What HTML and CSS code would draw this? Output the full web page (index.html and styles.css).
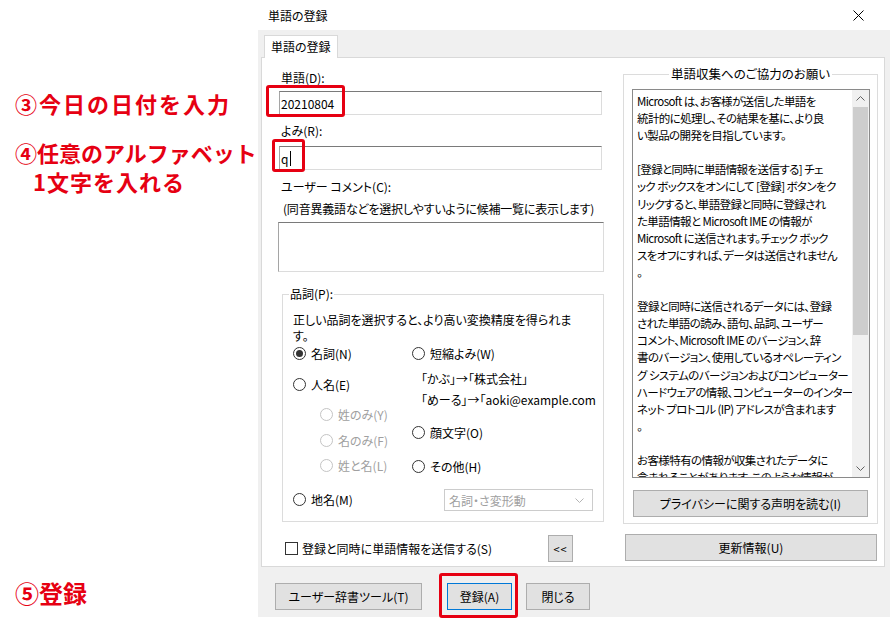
FILE: index.html
```html
<!DOCTYPE html>
<html lang="ja">
  <head>
    <meta charset="UTF-8" />
    <meta name="viewport" content="width=device-width, initial-scale=1.0" />
    <title>単語の登録</title>
    <link rel="stylesheet" href="styles.css">
  </head>
  <body>
    <div class="notes">
      <p class="note note-date">③今日の日付を入力</p>
      <p class="note note-yomi">④任意のアルファベット</p>
      <p class="note note-yomi-2">1文字を入れる</p>
      <p class="note note-submit">⑤登録</p>
    </div>

    <div class="dialog">
      <div class="titlebar">
        <span class="title">単語の登録</span>
        <svg class="close" width="11" height="11" viewBox="0 0 11 11">
          <path d="M0.5 0.5L10.5 10.5M10.5 0.5L0.5 10.5" stroke="#000" stroke-width="1" fill="none" />
        </svg>
      </div>

      <div class="dialog-body">
        <div class="tabs">
          <div class="tab">単語の登録</div>
        </div>

        <div class="panel">
          <!-- left: word entry -->
          <div class="col-left">
            <div class="label">単語(D):</div>
            <div class="field field-word">
              <div class="input">20210804</div>
              <div class="mark mark-word"></div>
            </div>

            <div class="label label-yomi">よみ(R):</div>
            <div class="field field-yomi">
              <div class="input">q<span class="caret"></span></div>
              <div class="mark mark-yomi"></div>
            </div>

            <div class="label label-comment">ユーザー コメント(C):</div>
            <div class="hint">(同音異義語などを選択しやすいように候補一覧に表示します)</div>
            <div class="textarea"></div>

            <div class="group pos-group">
              <span class="group-title">品詞(P):</span>
              <p class="pos-desc">正しい品詞を選択すると、より高い変換精度を得られま<br>す。</p>
              <div class="pos-cols">
                <div class="pos-col pos-col-left">
                  <div class="radio checked"><span class="radio-dot"></span>名詞(N)</div>
                  <div class="radio r-person"><span class="radio-dot"></span>人名(E)</div>
                  <div class="radio disabled sub r-sei"><span class="radio-dot"></span>姓のみ(Y)</div>
                  <div class="radio disabled sub r-mei"><span class="radio-dot"></span>名のみ(F)</div>
                  <div class="radio disabled sub r-seimei"><span class="radio-dot"></span>姓と名(L)</div>
                  <div class="radio r-place"><span class="radio-dot"></span>地名(M)</div>
                </div>
                <div class="pos-col pos-col-right">
                  <div class="radio"><span class="radio-dot"></span>短縮よみ(W)</div>
                  <div class="example ex-first">「かぶ」→「株式会社」</div>
                  <div class="example ex-second">「めーる」→「aoki@example.com</div>
                  <div class="radio r-face"><span class="radio-dot"></span>顔文字(O)</div>
                  <div class="radio r-other"><span class="radio-dot"></span>その他(H)</div>
                  <div class="combo">
                    <span>名詞・さ変形動</span>
                    <svg width="9" height="5" viewBox="0 0 9 5">
                      <path d="M0.5 0.5L4.5 4.5L8.5 0.5" fill="none" stroke="#b4b4b4" />
                    </svg>
                  </div>
                </div>
              </div>
            </div>

            <div class="send-row">
              <span class="checkbox"></span>
              <span class="send-label">登録と同時に単語情報を送信する(S)</span>
              <div class="btn btn-collapse">&lt;&lt;</div>
            </div>
          </div>

          <!-- right: info -->
          <div class="col-right">
            <div class="group info-group">
              <div class="info-title"><span>単語収集へのご協力のお願い</span></div>
              <div class="info-box">
                <div class="info-text">Microsoft は、お客様が送信した単語を
統計的に処理し、その結果を基に、より良
い製品の開発を目指しています。

[登録と同時に単語情報を送信する] チェ
ック ボックスをオンにして [登録] ボタンをク
リックすると、単語登録と同時に登録され
た単語情報と Microsoft IME の情報が
Microsoft に送信されます。チェック ボック
スをオフにすれば、データは送信されません
。

登録と同時に送信されるデータには、登録
された単語の読み、語句、品詞、ユーザー
コメント、Microsoft IME のバージョン、辞
書のバージョン、使用しているオペレーティン
グ システムのバージョンおよびコンピューター
ハードウェアの情報、コンピューターのインター
ネット プロトコル (IP) アドレスが含まれます
。

お客様特有の情報が収集されたデータに
含まれることがあります。このような情報が</div>
                <div class="scrollbar">
                  <div class="sb-arrow">
                    <svg width="9" height="5" viewBox="0 0 9 5">
                      <path d="M0.5 4.5L4.5 0.5L8.5 4.5" fill="none" stroke="#606060" />
                    </svg>
                  </div>
                  <div class="sb-thumb"></div>
                  <div class="sb-track"></div>
                  <div class="sb-arrow">
                    <svg width="9" height="5" viewBox="0 0 9 5">
                      <path d="M0.5 0.5L4.5 4.5L8.5 0.5" fill="none" stroke="#606060" />
                    </svg>
                  </div>
                </div>
              </div>
              <div class="btn btn-privacy">プライバシーに関する声明を読む(I)</div>
            </div>
            <div class="btn btn-update">更新情報(U)</div>
          </div>
        </div>

        <div class="actions">
          <div class="btn btn-tool">ユーザー辞書ツール(T)</div>
          <div class="btn-wrap">
            <div class="btn btn-default">登録(A)</div>
            <div class="mark mark-submit"></div>
          </div>
          <div class="btn btn-close">閉じる</div>
        </div>
      </div>
    </div>
  </body>
</html>
```

FILE: styles.css
```css
* {
  box-sizing: border-box;
}

body {
  margin: 0;
  width: 890px;
  height: 620px;
  display: flex;
  background: #fff;
  font-family: "Noto Sans CJK JP", sans-serif;
  font-size: 12px;
  color: #000;
  font-feature-settings: "palt";
  overflow: hidden;
}

/* annotations */
.notes {
  width: 258px;
  display: flex;
  flex-direction: column;
  padding: 0 0 13px 15px;
  color: #e60012;
  font-weight: bold;
  font-feature-settings: normal;
}

.note {
  margin: 0;
  font-size: 22px;
  line-height: 28px;
  letter-spacing: 2px;
  white-space: nowrap;
}

.note-date {
  margin-top: 89px;
}

.note-yomi {
  margin-top: 21px;
  letter-spacing: 0;
}

.note-yomi-2 {
  margin-top: 1px;
  padding-left: 18px;
  letter-spacing: 1px;
}

.note-submit {
  margin-top: auto;
  font-size: 24px;
  letter-spacing: 0;
}

.mark {
  position: absolute;
  border: 3px solid #e60012;
  border-radius: 3px;
  pointer-events: none;
}

/* dialog */
.dialog {
  width: 632px;
  height: 617px;
  display: flex;
  flex-direction: column;
}

.titlebar {
  height: 30px;
  display: flex;
  align-items: center;
  justify-content: space-between;
  padding: 0 26px 0 10px;
  background: #fff;
}

.dialog-body {
  flex: 1;
  display: flex;
  flex-direction: column;
  background: #f0f0f0;
  padding: 0 5px 0 3px;
}

.tabs {
  display: flex;
  padding: 5px 0 0 3px;
}

.tab {
  height: 23px;
  padding: 0 6px;
  line-height: 21px;
  background: #fff;
  border: 1px solid #d9d9d9;
  border-bottom: none;
  margin-bottom: -1px;
  position: relative;
  z-index: 1;
}

.panel {
  height: 510px;
  display: flex;
  padding: 12px 6px 0 16px;
  background: #fff;
  border: 1px solid #d9d9d9;
}

.col-left {
  width: 326px;
  display: flex;
  flex-direction: column;
}

.label {
  line-height: 16px;
  padding-left: 3px;
}

.label-yomi {
  margin-top: 8px;
}

.label-comment {
  margin-top: 9px;
}

.field {
  position: relative;
  width: 323px;
  margin-left: 1px;
}

.field-word {
  margin-top: 5px;
}

.field-yomi {
  margin-top: 7px;
}

.input {
  height: 24px;
  display: flex;
  align-items: center;
  padding-left: 1px;
  background: #fff;
  border: 1px solid;
  border-color: #7a7a7a #dcdcdc #dcdcdc #a5a5a5;
}

.caret {
  width: 1px;
  height: 15px;
  margin-left: 2px;
  background: #000;
}

.mark-word {
  left: -13px;
  top: -6px;
  width: 79px;
  height: 32px;
}

.mark-yomi {
  left: -7px;
  top: -7px;
  width: 33px;
  height: 33px;
}

.hint {
  margin-top: 6px;
  padding-left: 5px;
  line-height: 16px;
  letter-spacing: -0.2px;
  white-space: nowrap;
}

.textarea {
  height: 50px;
  margin-top: 5px;
  background: #fff;
  border: 1px solid;
  border-color: #7a7a7a #dcdcdc #dcdcdc #a5a5a5;
}

.group {
  position: relative;
  border: 1px solid #dcdcdc;
}

.group-title {
  position: absolute;
  top: -9px;
  left: 6px;
  padding: 0 1px;
  line-height: 16px;
  background: #fff;
}

.pos-group {
  width: 322px;
  height: 228px;
  margin: 22px 0 0 4px;
  padding: 17px 0 0 10px;
}

.pos-desc {
  margin: 0;
  line-height: 16px;
}

.pos-cols {
  display: flex;
}

.pos-col-left {
  width: 119px;
}

.radio {
  height: 18px;
  display: flex;
  align-items: center;
  white-space: nowrap;
}

.radio-dot {
  width: 13px;
  height: 13px;
  flex: none;
  margin-right: 5px;
  display: flex;
  align-items: center;
  justify-content: center;
  background: #fff;
  border: 1px solid #333;
  border-radius: 50%;
}

.radio.checked .radio-dot::after {
  content: "";
  width: 7px;
  height: 7px;
  border-radius: 50%;
  background: #333;
}

.radio.disabled {
  color: #a0a0a0;
}

.radio.disabled .radio-dot {
  border-color: #c4c4c4;
}

.radio.sub {
  margin-left: 27px;
}

.r-person {
  margin-top: 13px;
}

.r-sei {
  margin-top: 12px;
}

.r-mei {
  margin-top: 8px;
}

.r-seimei {
  margin-top: 7px;
}

.r-place {
  margin-top: 16px;
}

.example {
  height: 18px;
  line-height: 18px;
  margin-left: 9px;
  white-space: nowrap;
}

.ex-first {
  margin-top: 8px;
}

.ex-second {
  margin-top: 3px;
}

.r-face {
  margin-top: 14px;
}

.r-other {
  margin-top: 16px;
}

.combo {
  width: 149px;
  height: 22px;
  margin: 14px 0 0 32px;
  padding: 0 8px 0 4px;
  display: flex;
  align-items: center;
  justify-content: space-between;
  color: #a0a0a0;
  background: #fff;
  border: 1px solid #cccccc;
}

.send-row {
  height: 27px;
  margin-top: 13px;
  padding: 0 31px 0 7px;
  display: flex;
  align-items: center;
}

.checkbox {
  width: 13px;
  height: 13px;
  background: #fff;
  border: 1px solid #333;
}

.send-label {
  margin-left: 4px;
}

/* buttons */
.btn {
  height: 27px;
  display: flex;
  align-items: center;
  justify-content: center;
  white-space: nowrap;
  background: #e1e1e1;
  border: 1px solid #adadad;
}

.btn-collapse {
  width: 25px;
  margin-left: auto;
  font-size: 11px;
  letter-spacing: 1px;
}

.col-right {
  width: 255px;
  margin: 4px 0 0 19px;
  display: flex;
  flex-direction: column;
}

.info-group {
  padding: 14px 7px 6px 8px;
}

.info-title {
  position: absolute;
  top: -9px;
  left: 0;
  right: 0;
  text-align: center;
  line-height: 16px;
  font-size: 12.5px;
}

.info-title span {
  padding: 0 2px;
  background: #fff;
}

.info-box {
  height: 389px;
  display: flex;
  background: #fff;
  border: 1px solid #8a8a8a;
}

.info-text {
  flex: 1;
  padding: 3px 0 0 4px;
  font-size: 11.5px;
  line-height: 17.1px;
  letter-spacing: -0.6px;
  white-space: pre;
  overflow: hidden;
}

.scrollbar {
  width: 17px;
  display: flex;
  flex-direction: column;
  background: #f0f0f0;
}

.sb-arrow {
  height: 17px;
  display: flex;
  align-items: center;
  justify-content: center;
}

.sb-thumb {
  height: 228px;
  margin: 0 1px;
  background: #cdcdcd;
}

.sb-track {
  flex: 1;
}

.btn-privacy {
  width: 235px;
  margin: 12px 0 0 1px;
}

.btn-update {
  width: 252px;
  margin: 10px 0 0 2px;
}

.actions {
  display: flex;
  margin-top: 16px;
  padding-left: 14px;
}

.btn-tool {
  width: 147px;
}

.btn-wrap {
  position: relative;
  margin-left: 25px;
}

.btn-default {
  width: 65px;
  border-color: #0078d7;
}

.mark-submit {
  left: -8px;
  top: -10px;
  width: 79px;
  height: 45px;
}

.btn-close {
  width: 64px;
  margin-left: 14px;
}
```
